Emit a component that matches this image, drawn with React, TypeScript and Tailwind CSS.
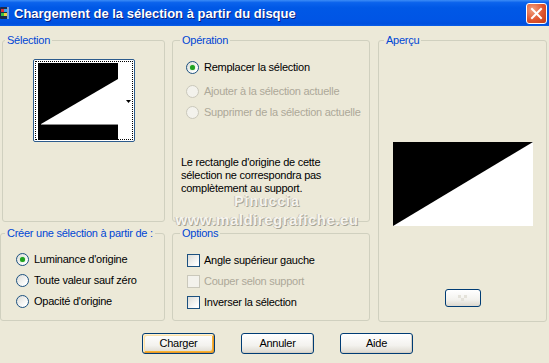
import React from 'react'

const FONT = "font-['Liberation_Sans',Arial,sans-serif]"

function Radio({ checked, disabled, label }: { checked?: boolean; disabled?: boolean; label: string }) {
  return (
    <div className="flex items-center h-[13px]">
      <span
        className={
          disabled
            ? 'w-[13px] h-[13px] rounded-full border border-[#cac8bb] bg-[#f3f2ec] shrink-0'
            : 'w-[13px] h-[13px] rounded-full border border-[#1c5180] bg-[linear-gradient(135deg,#dcdcd7,#ffffff_80%)] shrink-0 flex items-center justify-center'
        }
      >
        {checked && <span className="w-[5px] h-[5px] rounded-full bg-[#21a121] shadow-[0_0_1px_#55d655]" />}
      </span>
      <span className={disabled ? 'ml-[5px] text-[#aca899] whitespace-nowrap' : 'ml-[5px] text-black whitespace-nowrap'}>
        {label}
      </span>
    </div>
  )
}

function Check({ disabled, label }: { disabled?: boolean; label: string }) {
  return (
    <div className="flex items-center h-[13px]">
      <span
        className={
          disabled
            ? 'w-[13px] h-[13px] border border-[#cac8bb] bg-[#f3f2ec] shrink-0'
            : 'w-[13px] h-[13px] border border-[#1c5180] bg-[linear-gradient(135deg,#dcdcd7,#ffffff_85%)] shrink-0'
        }
      />
      <span className={disabled ? 'ml-[4px] text-[#aca899] whitespace-nowrap' : 'ml-[4px] text-black whitespace-nowrap'}>
        {label}
      </span>
    </div>
  )
}

function XpButton({ label, primary }: { label: string; primary?: boolean }) {
  return (
    <button
      className={
        primary
          ? 'w-[73px] h-[21px] rounded-[3px] border border-[#003c74] bg-[linear-gradient(to_bottom,#ffffff,#f3f2ee_60%,#dcd8ce)] text-black text-[11px] leading-[13px] shadow-[inset_1px_1px_0_#fff0cf,inset_-1px_-1px_0_#e5972c,inset_2px_2px_0_#fce1a8,inset_-2px_-2px_0_#f8b330]'
          : 'w-[73px] h-[21px] rounded-[3px] border border-[#003c74] bg-[linear-gradient(to_bottom,#ffffff,#f3f2ee_60%,#dcd8ce)] text-black text-[11px] leading-[13px] shadow-[inset_-1px_-1px_0_#d6d0c5]'
      }
    >
      {label}
    </button>
  )
}

export default function App() {
  return (
    <div className={`${FONT} w-[549px] h-[363px] bg-[#ece9d8] text-[11px] leading-[13px] tracking-[-0.25px] overflow-hidden relative`}>
      {/* Title bar */}
      <div className="h-[26px] flex items-center bg-[linear-gradient(to_bottom,#3c8cf6_0%,#0b63ec_10%,#0058e6_30%,#0055e5_75%,#0050de_92%,#0a5fe9_100%)]">
        <svg width="10" height="14" viewBox="0 0 10 14" className="shrink-0">
          <rect x="0" y="1" width="9" height="12" rx="1" fill="#1a2a4a" />
          <rect x="1" y="3" width="3" height="3" fill="#e0303a" />
          <rect x="4" y="3" width="3" height="3" fill="#34a0f0" />
          <rect x="1" y="7" width="3" height="3" fill="#40c040" />
          <rect x="4" y="7" width="3" height="3" fill="#f0d040" />
          <rect x="7" y="1" width="2" height="12" fill="#7aa0d8" />
        </svg>
        <span className="ml-[4px] text-white font-bold text-[13px] tracking-[0px] [text-shadow:1px_1px_0_#0a1f7a] whitespace-nowrap">
          Chargement de la sélection à partir du disque
        </span>
        <div className="ml-auto mr-[2px] w-[21px] h-[21px] rounded-[3px] border border-white bg-[radial-gradient(circle_at_30%_30%,#f0a080,#e0552e_55%,#c23d18)] flex items-center justify-center">
          <svg width="13" height="13" viewBox="0 0 13 13">
            <path d="M2 2 L11 11 M11 2 L2 11" stroke="white" strokeWidth="2" strokeLinecap="square" />
          </svg>
        </div>
      </div>

      {/* Groups */}
      <div className="flex pl-[2px] pt-[8px]">
        {/* Column 1 */}
        <div className="w-[163px] flex flex-col gap-[5px]">
          <fieldset className="h-[188px] border border-[#d0d0bf] rounded-[3px]">
            <legend className="ml-[2px] px-[2px] text-[#0046d5]">Sélection</legend>
            <div className="mt-[12px] mx-auto w-[102px] h-[83px] rounded-[2px] border border-[#2c5b8c] bg-white p-[1px]">
              <div className="w-full h-full border border-dotted border-black flex pl-[2px] pt-[1px]">
                <svg width="80" height="77" viewBox="0 0 80 77" className="shrink-0">
                  <rect width="80" height="77" fill="black" />
                  <polygon points="3,61 80,16 80,61" fill="white" />
                  <line x1="3" y1="61.5" x2="80" y2="61.5" stroke="#8a8a8a" strokeWidth="1" />
                </svg>
                <div className="flex-1 flex items-center justify-end pr-[1px]">
                  <svg width="5" height="3" viewBox="0 0 5 3">
                    <polygon points="0,0 5,0 2.5,3" fill="black" />
                  </svg>
                </div>
              </div>
            </div>
          </fieldset>
          <fieldset className="h-[94px] border border-[#d0d0bf] rounded-[3px] -ml-[2px] w-[165px]">
            <legend className="ml-[4px] px-[2px] text-[#0046d5]">Créer une sélection à partir de :</legend>
            <div className="pl-[15px] pt-[13px] flex flex-col gap-[8px]">
              <Radio checked label="Luminance d'origine" />
              <Radio label="Toute valeur sauf zéro" />
              <Radio label="Opacité d'origine" />
            </div>
          </fieldset>
        </div>

        {/* Column 2 */}
        <div className="w-[198px] ml-[7px] flex flex-col gap-[5px]">
          <fieldset className="h-[188px] border border-[#d0d0bf] rounded-[3px]">
            <legend className="ml-[7px] px-[2px] text-[#0046d5]">Opération</legend>
            <div className="pl-[13px] pt-[14px] flex flex-col">
              <Radio checked label="Remplacer la sélection" />
              <div className="h-[11px]" />
              <Radio disabled label="Ajouter à la sélection actuelle" />
              <div className="h-[8px]" />
              <Radio disabled label="Supprimer de la sélection actuelle" />
            </div>
            <p className="pl-[8px] mt-[37px] text-black">
              Le rectangle d'origine de cette
              <br />
              sélection ne correspondra pas
              <br />
              complètement au support.
            </p>
          </fieldset>
          <fieldset className="h-[94px] border border-[#d0d0bf] rounded-[3px]">
            <legend className="ml-[7px] px-[2px] text-[#0046d5]">Options</legend>
            <div className="pl-[14px] pt-[14px] flex flex-col gap-[8px]">
              <Check label="Angle supérieur gauche" />
              <Check disabled label="Couper selon support" />
              <Check label="Inverser la sélection" />
            </div>
          </fieldset>
        </div>

        {/* Column 3 */}
        <div className="w-[169px] ml-[8px]">
          <fieldset className="h-[288px] border border-[#d0d0bf] rounded-[3px]">
            <legend className="ml-[5px] px-[2px] text-[#0046d5]">Aperçu</legend>
            <svg width="140" height="84" viewBox="0 0 140 84" className="block mx-auto mt-[95px]">
              <rect width="140" height="84" fill="white" />
              <polygon points="0,0 140,0 0,84" fill="black" />
            </svg>
            <div className="mt-[63px] mx-auto w-[36px] h-[18px] rounded-[3px] border border-[#003c74] bg-[linear-gradient(to_bottom,#ffffff,#f3f2ee_60%,#dcd8ce)] flex items-center justify-center">
              <svg width="14" height="10" viewBox="0 0 14 10">
                <rect x="2" y="2" width="3" height="3" fill="#e4e2da" />
                <rect x="8" y="2" width="3" height="3" fill="#e4e2da" />
                <rect x="5" y="5" width="3" height="3" fill="#e4e2da" />
              </svg>
            </div>
          </fieldset>
        </div>
      </div>

      {/* Buttons */}
      <div className="flex justify-center gap-[26px] pl-[6px] mt-[11px]">
        <XpButton primary label="Charger" />
        <XpButton label="Annuler" />
        <XpButton label="Aide" />
      </div>

      {/* Watermark */}
      <div className="absolute left-[172px] top-[194px] w-[190px] flex flex-col items-center pointer-events-none font-bold text-[#f6f4ee] tracking-[0.5px] [text-shadow:1px_1px_0_#a8a597,-1px_0_0_#c8c5b8]">
        <span className="text-[14px] leading-[15px] tracking-[1px]">Pinuccia</span>
        <span className="text-[15px] leading-[15px] mt-[3px]">www.maldiregrafiche.eu</span>
      </div>
    </div>
  )
}
